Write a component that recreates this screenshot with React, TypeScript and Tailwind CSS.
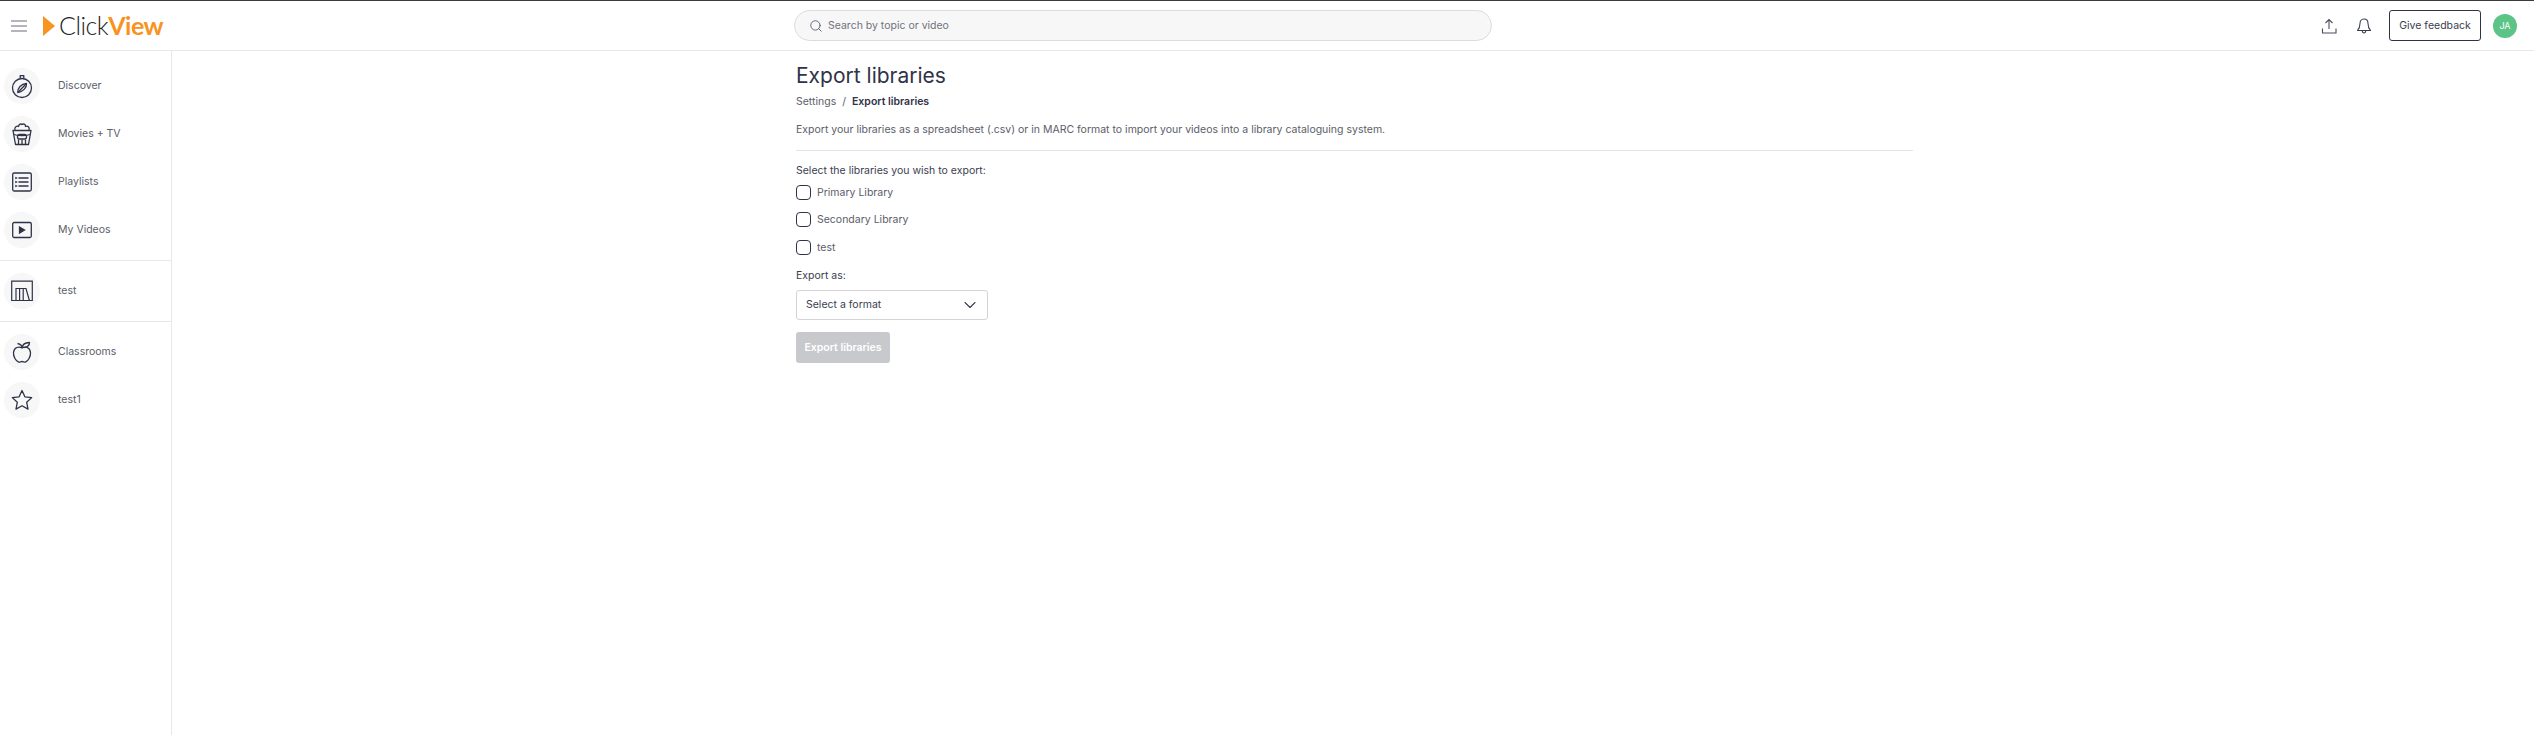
import React from "react";
import { ChevronDown, Search } from "lucide-react";

const ICON = "#2f3348";

const Compass = () => (
  <svg width="24" height="26" viewBox="0 0 24 26" fill="none" stroke={ICON} strokeWidth="1.3" strokeLinejoin="round">
    <circle cx="12" cy="15" r="9.5" />
    <path d="M10.2 5.2V2.6h3.600v2.600" />
    <path d="M16.500 10.500C16.800 14.500 13.500 18.500 7.800 19.500 7.500 15 11 11 16.500 10.500z" />
    <path d="M7.800 19.500L16.500 10.500" />
  </svg>
);

const Popcorn = () => (
  <svg width="24" height="26" viewBox="0 0 24 26" fill="none" stroke={ICON} strokeWidth="1.3" strokeLinejoin="round">
    <path d="M5 9c-1-3 2-4.500 3.500-3.500C9 3 11 2.500 12 3.500c1.500-1 3.500-.5 3.500 2C17.500 4.500 20 6 19 9" />
    <path d="M3 9.500h18l-2.500 14h-13z" />
    <path d="M4 13.500c5 1.500 11 1.500 16 0" />
    <rect x="7.500" y="13.500" width="9" height="4.500" rx="2" />
    <path d="M8.500 18.500v5M12 18.500v5M15.500 18.500v5" />
  </svg>
);

const ListBox = () => (
  <svg width="22" height="22" viewBox="0 0 22 22" fill="none" stroke={ICON} strokeWidth="1.3">
    <rect x="1.700" y="2" width="18.600" height="18" rx="1.500" />
    <path d="M7.500 7h10M7.500 11h10M7.500 15h10" />
    <path d="M4.500 6.200l1.800.8-1.800.8zM4.500 10.200l1.800.8-1.800.8zM4.500 14.200l1.800.8-1.800.8z" fill={ICON} strokeWidth="0.6" />
  </svg>
);

const VideoBox = () => (
  <svg width="22" height="20" viewBox="0 0 22 20" fill="none" stroke={ICON} strokeWidth="1.3">
    <rect x="1.700" y="2.500" width="18.600" height="15" rx="1.500" />
    <path d="M8.500 7l5 3-5 3z" fill={ICON} />
  </svg>
);

const Library = () => (
  <svg width="22" height="22" viewBox="0 0 22 22" fill="none" stroke={ICON} strokeWidth="1.200">
    <path d="M.7 20.500V1.200h20.600v19.300z" />
    <path d="M5 20.500V8.500h3.600v12M8.600 20.500V8.500h3.600v12M12.200 20.500V8.500h2.800l3.400 12" />
  </svg>
);

const Apple = () => (
  <svg width="20" height="22" viewBox="0 0 20 22" fill="none" stroke={ICON} strokeWidth="1.300" strokeLinejoin="round">
    <path d="M10 7C7 5 2 6.200 1.500 11.500c-.3 4 2.500 9 5 9.500 1.300.2 2.300-.5 3.500-.5s2.200.7 3.500.5c2.500-.5 5.300-5.500 5-9.500C18 6.200 13 5 10 7z" />
    <path d="M10 7C10 4.500 8.500 3 5.500 2.500M10.500 6.500c0-3.500 3-4.800 7-5 0 3-2.500 4.500-5 5" />
  </svg>
);

const Star = () => (
  <svg width="22" height="22" viewBox="0 0 22 22" fill="none" stroke={ICON} strokeWidth="1.300" strokeLinejoin="round">
    <path d="M11 1.500l2.900 6.300 6.800.8-5 4.700 1.300 6.800-6-3.400-6 3.400 1.300-6.800-5-4.700 6.800-.8z" />
  </svg>
);

const Upload = () => (
  <svg width="16" height="16" viewBox="0 0 16 16" fill="none" stroke="#4a4d5e" strokeWidth="1.100">
    <path d="M8 11V1.500M4.500 5L8 1.500 11.500 5" />
    <path d="M1.500 10.500v4.500h13.500v-4.500" />
  </svg>
);

const Bell = () => (
  <svg width="16" height="16" viewBox="0 0 16 18" fill="none" stroke="#3a3d50" strokeWidth="1.200" strokeLinejoin="round">
    <path d="M8 1.200c-3 0-4.500 2.300-4.500 5 0 4-1 6-2.800 7.800h14.600C13.500 12.200 12.500 10.200 12.500 6.200c0-2.700-1.500-5-4.500-5z" />
    <path d="M6 14.500c.2 1.500 1 2.300 2 2.300s1.800-.8 2-2.300" />
  </svg>
);

function NavItem({ icon, label }: { icon: React.ReactNode; label: string }) {
  return (
    <div className="flex h-[48px] items-center">
      <span className="ml-1 flex h-9 w-9 flex-shrink-0 items-center justify-center rounded-full bg-[#f7f7f8]">{icon}</span>
      <span className="mb-[1px] ml-[18px] text-[10.5px] text-[#5b5d6a]">{label}</span>
    </div>
  );
}

function LibraryCheck({ label, className = "" }: { label: string; className?: string }) {
  return (
    <label className={`flex h-[15px] items-center ${className}`}>
      <span className="h-[15px] w-[15px] rounded-[4px] border border-[#2f3348] bg-white" />
      <span className="ml-[6px] text-[10.5px] text-[#5b5d6a]">{label}</span>
    </label>
  );
}

export default function App() {
  return (
    <div className="flex h-[735px] w-full flex-col border-t border-[#3b3b3b] bg-white font-['Inter',sans-serif]">
      <header className="flex h-[50px] flex-shrink-0 items-center border-b border-[#e8e8e8]">
        <div className="flex w-[794px] flex-shrink-0 items-center">
          <svg className="ml-[11px]" width="16" height="12" viewBox="0 0 16 12" fill="none" stroke="#6b6d7a" strokeWidth="1.200">
            <path d="M0 1h16M0 6h16M0 11h16" />
          </svg>
          <svg className="ml-[16px]" width="12" height="20" viewBox="0 0 12 20" fill="#f7931e">
            <path d="M0 0l12 10L0 20z" />
          </svg>
          <span className="ml-[4px] text-[25px] leading-none tracking-[-0.5px] text-[#222] font-['Lato',sans-serif] font-light">Click</span>
          <span className="text-[25px] leading-none tracking-[-0.5px] text-[#f7931e] font-['Lato',sans-serif] font-bold">View</span>
        </div>
        <div className="flex h-[31px] w-[698px] flex-shrink-0 items-center rounded-full border border-[#dcdcdc] bg-[#f7f7f7] pl-[14px]">
          <Search size={14} strokeWidth={1.500} color="#55586a" />
          <span className="ml-[5px] text-[10.5px] text-[#70727f]">Search by topic or video</span>
        </div>
        <div className="flex flex-1 items-center justify-end">
          <Upload />
          <span className="ml-[19px]"><Bell /></span>
          <span className="ml-[17px] flex h-[31px] w-[92px] items-center justify-center rounded-[3px] border border-[#2f3348] text-[10.5px] text-[#3a3d50]">Give feedback</span>
          <span className="ml-[12px] mr-[17px] flex h-6 w-6 items-center justify-center rounded-full bg-[#5cc486] text-[9px] text-white">JA</span>
        </div>
      </header>
      <div className="flex min-h-0 flex-1">
        <aside className="w-[172px] flex-shrink-0 border-r border-[#e8e8e8] pt-[11px]">
          <NavItem icon={<Compass />} label="Discover" />
          <NavItem icon={<Popcorn />} label="Movies + TV" />
          <NavItem icon={<ListBox />} label="Playlists" />
          <NavItem icon={<VideoBox />} label="My Videos" />
          <div className="my-[6px] border-t border-[#e8e8e8]" />
          <NavItem icon={<Library />} label="test" />
          <div className="my-[6px] border-t border-[#e8e8e8]" />
          <NavItem icon={<Apple />} label="Classrooms" />
          <NavItem icon={<Star />} label="test1" />
        </aside>
        <main className="ml-[624px] w-[1117px] pt-[10px]">
          <h1 className="text-[21px] leading-[30px] text-[#2f3348]">Export libraries</h1>
          <div className="mt-[3px] flex text-[10.5px] leading-[16px] text-[#5b5d6a]">
            <span>Settings</span>
            <span className="mx-[6px]">/</span>
            <span className="font-semibold text-[#2f3348]">Export libraries</span>
          </div>
          <p className="mt-[12px] text-[10.5px] leading-[16px] text-[#5b5d6a]">
            Export your libraries as a spreadsheet (.csv) or in MARC format to import your videos into a library cataloguing system.
          </p>
          <div className="mt-[12px] border-t border-[#e4e4e4]" />
          <p className="mt-[12px] text-[10.5px] leading-[16px] text-[#3a3d50]">Select the libraries you wish to export:</p>
          <LibraryCheck label="Primary Library" className="mt-[6px]" />
          <LibraryCheck label="Secondary Library" className="mt-[12px]" />
          <LibraryCheck label="test" className="mt-[13px]" />
          <p className="mt-[13px] text-[10.5px] leading-[16px] text-[#3a3d50]">Export as:</p>
          <div className="mt-[6px] flex h-[30px] w-[192px] items-center justify-between rounded-[3px] border border-[#d4d4d8] pl-[9px] pr-[7px] text-[10.5px] text-[#3a3d50]">
            <span>Select a format</span>
            <ChevronDown size={20} strokeWidth={1.300} />
          </div>
          <button className="mt-[12px] block h-[31px] w-[94px] rounded-[3px] bg-[#c8c9cd] text-[10.5px] font-semibold text-white">Export libraries</button>
        </main>
      </div>
    </div>
  );
}
